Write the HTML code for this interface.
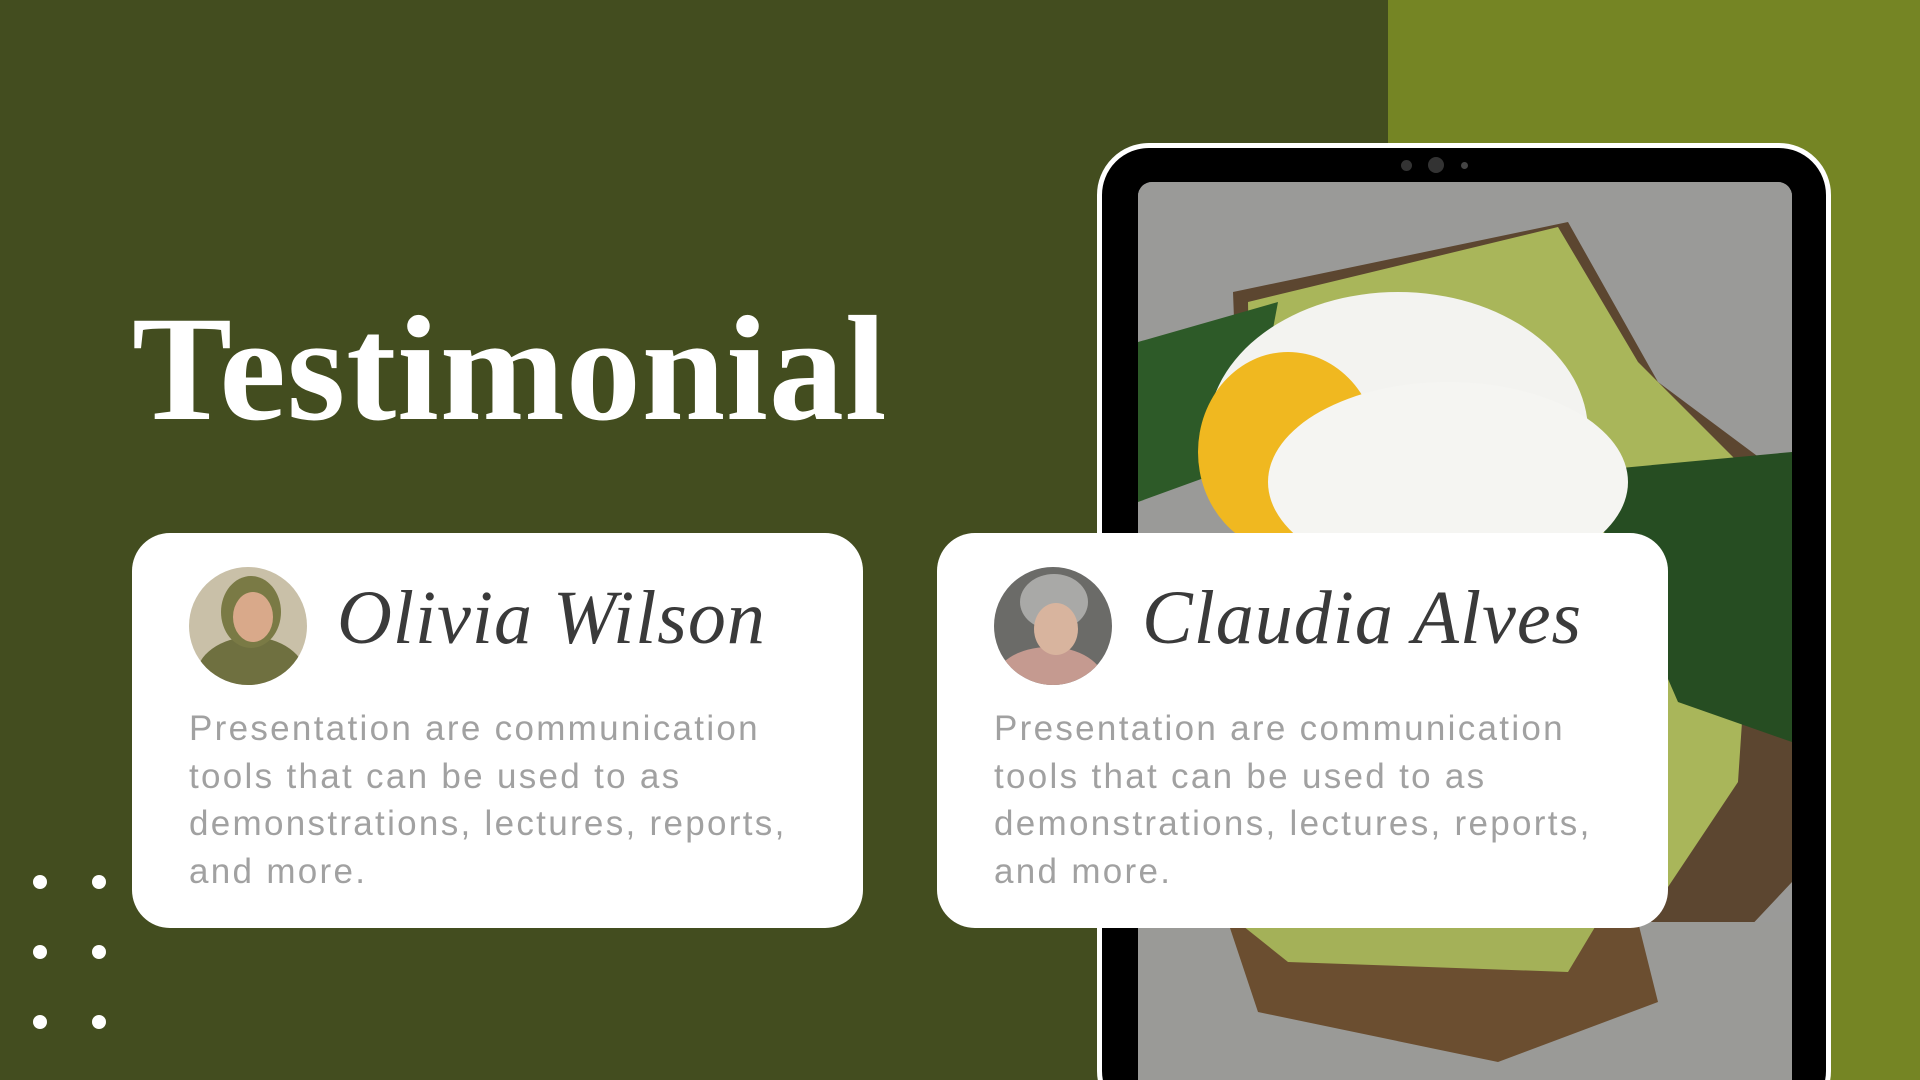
<!DOCTYPE html>
<html><head><meta charset="utf-8"><style>
*{margin:0;padding:0;box-sizing:border-box}
html,body{width:1920px;height:1080px;overflow:hidden}
body{background:#434d1f;position:relative;font-family:"Liberation Sans",sans-serif}
.strip{position:absolute;left:1388px;top:0;width:532px;height:1080px;background:#758524}
.tab{position:absolute;left:1097px;top:143px;width:734px;height:980px;background:#000;border:5px solid #fff;border-radius:52px}
.scr{position:absolute;left:1138px;top:182px;width:654px;height:898px;border-radius:14px 14px 0 0;overflow:hidden;background:#8e8e8c}
h1{position:absolute;left:132px;top:294px;font-family:"Liberation Serif",serif;font-weight:bold;font-size:150px;color:#fff;letter-spacing:1px;line-height:1;white-space:nowrap}
.card{position:absolute;top:533px;width:731px;height:395px;background:#fff;border-radius:38px}
.av{position:absolute;left:57px;top:34px;width:118px;height:118px;border-radius:50%;overflow:hidden}
.nm{position:absolute;left:205px;top:42px;font-family:"Liberation Serif",cursive;font-style:italic;font-size:76px;color:#3a3a3a;letter-spacing:1px;white-space:nowrap}
.tx{position:absolute;left:57px;top:172px;font-size:35px;line-height:47.5px;color:#a1a1a1;letter-spacing:2.3px;white-space:nowrap}
.dot{position:absolute;width:14px;height:14px;border-radius:50%;background:#fff}
</style></head><body>
<div class="strip"></div>
<div class="tab"></div>
<div style="position:absolute;left:1401px;top:160px;width:11px;height:11px;border-radius:50%;background:#333"></div>
<div style="position:absolute;left:1428px;top:157px;width:16px;height:16px;border-radius:50%;background:#333"></div>
<div style="position:absolute;left:1461px;top:162px;width:7px;height:7px;border-radius:50%;background:#444"></div>
<div class="scr"><svg width="654" height="898" viewBox="0 0 654 898">
<rect width="654" height="898" fill="#9a9a98"/>
<path d="M95 110 L430 40 L520 200 L654 300 L654 700 L560 800 L500 880 L120 780 Z" fill="#5c4630"/>
<path d="M110 120 L420 45 L500 180 L620 300 L600 600 L520 720 L120 740 Z" fill="#a9b65a"/>
<path d="M0 160 L140 120 L110 280 L0 320 Z" fill="#2d5a28"/>
<path d="M440 290 L654 270 L654 560 L540 520 Z" fill="#264d22"/>
<ellipse cx="260" cy="250" rx="190" ry="140" fill="#f3f3f0"/>
<ellipse cx="150" cy="270" rx="90" ry="100" fill="#f0b820"/>
<ellipse cx="310" cy="300" rx="180" ry="100" fill="#f5f5f2"/>
<rect x="0" y="740" width="654" height="160" fill="#9a9a97"/>
<path d="M90 740 L500 740 L520 820 L360 880 L120 830 Z" fill="#6b4e30"/>
<path d="M100 740 L460 740 L430 790 L150 780 Z" fill="#a4b158"/>
</svg></div>
<h1>Testimonial</h1>
<div class="card" style="left:132px">
<div class="av"><svg width="118" height="118"><rect width="118" height="118" fill="#c9c0a8"/><ellipse cx="62" cy="110" rx="55" ry="40" fill="#6f7040"/><ellipse cx="62" cy="45" rx="30" ry="36" fill="#7a7a45"/><ellipse cx="64" cy="50" rx="20" ry="25" fill="#d9a98a"/></svg></div>
<div class="nm">Olivia Wilson</div>
<div class="tx">Presentation are communication<br>tools that can be used to as<br>demonstrations, lectures, reports,<br>and more.</div>
</div>
<div class="card" style="left:937px">
<div class="av"><svg width="118" height="118"><rect width="118" height="118" fill="#6b6b68"/><ellipse cx="55" cy="115" rx="55" ry="35" fill="#c59a90"/><ellipse cx="60" cy="35" rx="34" ry="28" fill="#a9a9a7"/><ellipse cx="62" cy="62" rx="22" ry="26" fill="#d8b49e"/></svg></div>
<div class="nm">Claudia Alves</div>
<div class="tx">Presentation are communication<br>tools that can be used to as<br>demonstrations, lectures, reports,<br>and more.</div>
</div>
<div class="dot" style="left:33px;top:875px"></div><div class="dot" style="left:92px;top:875px"></div>
<div class="dot" style="left:33px;top:945px"></div><div class="dot" style="left:92px;top:945px"></div>
<div class="dot" style="left:33px;top:1015px"></div><div class="dot" style="left:92px;top:1015px"></div>
</body></html>
